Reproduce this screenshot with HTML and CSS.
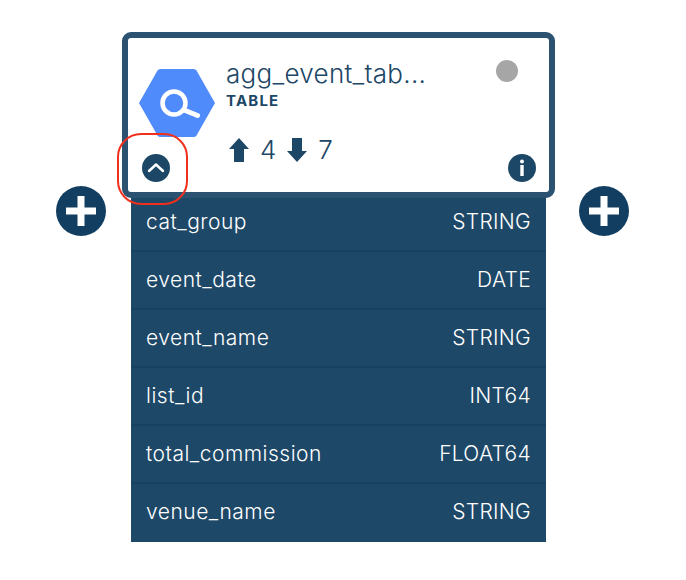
FILE: index.html
```html
<!DOCTYPE html>
<html lang="en">
<head>
  <meta charset="UTF-8">
  <meta name="viewport" content="width=device-width, initial-scale=1.0">
  <title>Table node</title>
  <link rel="stylesheet" href="styles.css">
</head>
<body>
  <div class="stage">
    <svg class="add" viewBox="0 0 50 50" width="50" height="50">
      <circle cx="25" cy="25" r="25" fill="#123f61"></circle>
      <path d="M21.5 10h7v11.500h11.500v7H28.500v11.500h-7V28.500H10v-7h11.500z" fill="#fff"></path>
    </svg>

    <div class="node">
      <div class="card">
        <div class="card-left">
          <svg class="hex" viewBox="0 0 78 68" width="78" height="68">
            <path d="M1 34 L19.5 1.5 Q20.5 0 22.5 0 L55.5 0 Q57.5 0 58.5 1.5 L77 34 L58.5 66.5 Q57.5 68 55.5 68 L22.5 68 Q20.5 68 19.5 66.5 Z" fill="#4f8bfa"></path>
            <circle cx="36" cy="34" r="11.5" fill="none" stroke="#fff" stroke-width="4.5"></circle>
            <path d="M46 41 L59.5 46.5" fill="none" stroke="#fff" stroke-width="5" stroke-linecap="round"></path>
          </svg>
          <svg class="round-btn" viewBox="0 0 28 28" width="28" height="28">
            <circle cx="14" cy="14" r="14" fill="#1c4766"></circle>
            <path d="M7 17 L14 10.5 L21 17" fill="none" stroke="#fff" stroke-width="2.5" stroke-linecap="round" stroke-linejoin="round"></path>
          </svg>
        </div>

        <div class="card-mid">
          <div class="title">agg_event_tab...</div>
          <div class="kind">TABLE</div>
          <div class="counts">
            <svg viewBox="0 0 20 24" width="20" height="24"><path d="M10 0 L20 11 H15 V24 H5 V11 H0 Z" fill="#1c4766"></path></svg>
            <span class="num">4</span>
            <svg viewBox="0 0 20 24" width="20" height="24"><path d="M10 24 L20 13 H15 V0 H5 V13 H0 Z" fill="#1c4766"></path></svg>
            <span class="num">7</span>
          </div>
        </div>

        <div class="card-right">
          <div class="dot"></div>
          <svg class="round-btn" viewBox="0 0 28 28" width="28" height="28">
            <circle cx="14" cy="14" r="14" fill="#1c4766"></circle>
            <circle cx="14" cy="7.5" r="2" fill="#fff"></circle>
            <rect x="12.3" y="11" width="3.4" height="11" fill="#fff"></rect>
          </svg>
        </div>
      </div>

      <div class="fields">
        <div class="field"><span class="name">cat_group</span><span>STRING</span></div>
        <div class="field"><span class="name">event_date</span><span>DATE</span></div>
        <div class="field"><span class="name">event_name</span><span>STRING</span></div>
        <div class="field"><span class="name">list_id</span><span>INT64</span></div>
        <div class="field"><span class="name">total_commission</span><span>FLOAT64</span></div>
        <div class="field"><span class="name">venue_name</span><span>STRING</span></div>
      </div>

      <!-- red highlight around the collapse button -->
      <div class="highlight"></div>
    </div>

    <svg class="add" viewBox="0 0 50 50" width="50" height="50">
      <circle cx="25" cy="25" r="25" fill="#123f61"></circle>
      <path d="M21.5 10h7v11.500h11.500v7H28.500v11.500h-7V28.500H10v-7h11.500z" fill="#fff"></path>
    </svg>
  </div>
</body>
</html>
```

FILE: styles.css
```css
body {
  margin: 0;
  background-color: #fff;
  font-family: Inter, "Liberation Sans", sans-serif;
  color: #1c4766;
}

.stage {
  display: flex;
  align-items: flex-start;
  padding: 32px 0 0 56px;
}

.add {
  flex: none;
  margin-top: 154px;
}

.node {
  position: relative;
  width: 433px;
  margin: 0 24px 0 16px;
}

.card {
  position: relative;
  z-index: 1;
  display: flex;
  box-sizing: border-box;
  height: 166px;
  border: 6px solid #2c5272;
  border-radius: 9px;
  background-color: #fff;
}

.card-left {
  display: flex;
  flex-direction: column;
  align-items: flex-start;
  width: 88px;
  padding: 31px 0 0 10px;
  box-sizing: border-box;
}

.hex {
  display: block;
}

.round-btn {
  display: block;
}

.card-left .round-btn {
  margin: 17px 0 0 4px;
}

.card-mid {
  flex: 1;
  padding: 20px 0 0 10px;
}

.title {
  font-size: 26px;
  line-height: 32px;
  letter-spacing: 0.3px;
  font-weight: 350;
}

.kind {
  margin-top: 2px;
  font-size: 15px;
  line-height: 18px;
  font-weight: 700;
  letter-spacing: 1.2px;
}

.counts {
  display: flex;
  align-items: center;
  gap: 11px;
  margin: 25px 0 0 3px;
}

.num {
  font-size: 26px;
  line-height: 30px;
  font-weight: 350;
}

.card-right {
  display: flex;
  flex-direction: column;
  align-items: flex-end;
  justify-content: space-between;
  width: 60px;
  padding: 22px 13px 10px 0;
  box-sizing: border-box;
}

.dot {
  width: 22px;
  height: 22px;
  margin-right: 18px;
  border-radius: 50%;
  background-color: #a6a6a6;
}

.fields {
  margin: -4px 9px 0;
}

.field {
  display: flex;
  justify-content: space-between;
  align-items: center;
  box-sizing: border-box;
  height: 58px;
  padding: 0 15px 2px;
  border-bottom: 2px solid #184162;
  background-color: #1e4868;
  color: #fff;
  font-size: 21px;
  letter-spacing: 0.3px;
  font-weight: 350;
}

.field .name {
  letter-spacing: 0.5px;
}

.field:last-child {
  padding-bottom: 4px;
  border-bottom: 0;
}

.highlight {
  position: absolute;
  z-index: 2;
  left: -5px;
  top: 101px;
  width: 67px;
  height: 68px;
  border: 2px solid #f0301c;
  border-radius: 24px;
}
```
